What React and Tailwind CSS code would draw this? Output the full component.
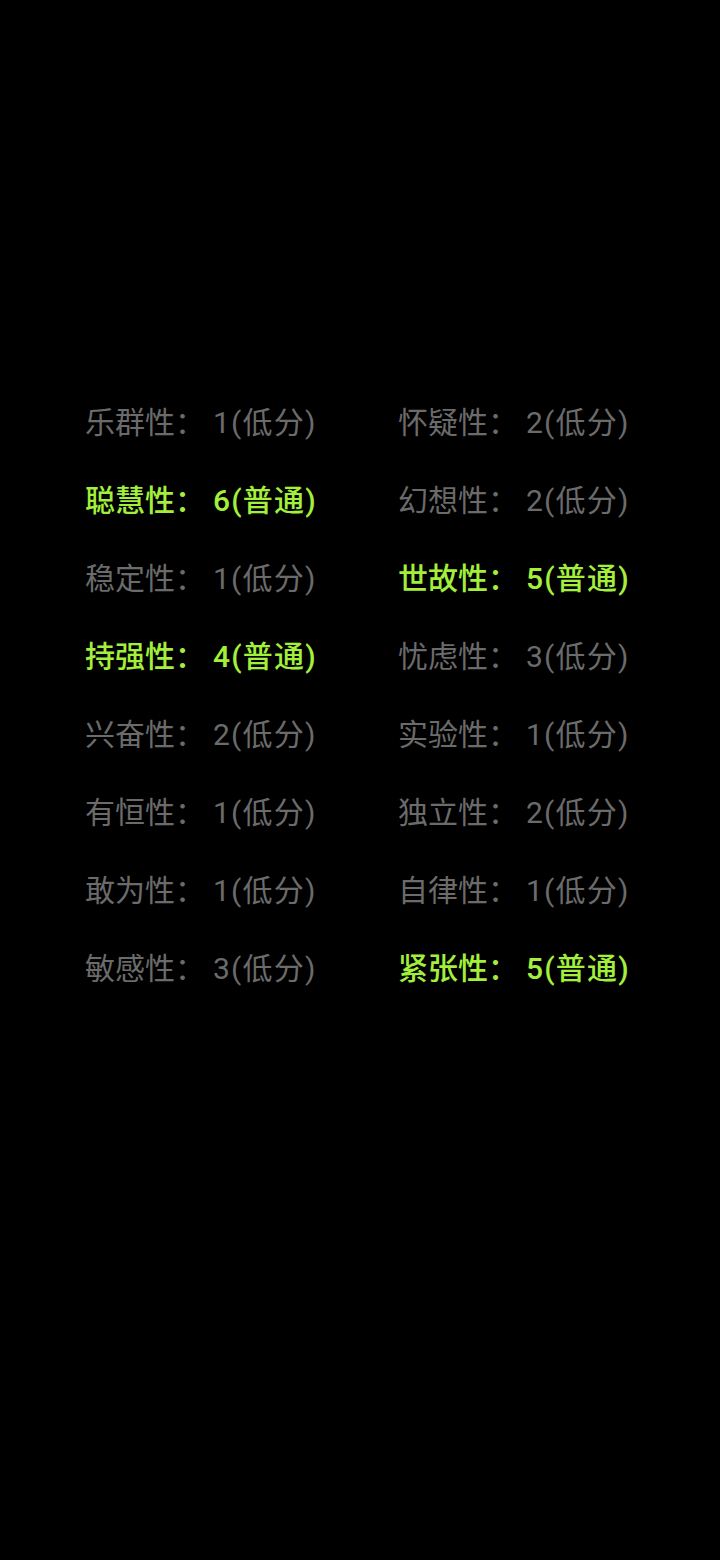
const traits = [
  ['乐群性', 1, false],
  ['怀疑性', 2, false],
  ['聪慧性', 6, true],
  ['幻想性', 2, false],
  ['稳定性', 1, false],
  ['世故性', 5, true],
  ['持强性', 4, true],
  ['忧虑性', 3, false],
  ['兴奋性', 2, false],
  ['实验性', 1, false],
  ['有恒性', 1, false],
  ['独立性', 2, false],
  ['敢为性', 1, false],
  ['自律性', 1, false],
  ['敏感性', 3, false],
  ['紧张性', 5, true],
];

export default function App() {
  return (
    <div
      className="bg-black w-[720px] h-[1560px] pt-[384px] pl-[85px]"
      style={{ fontFamily: 'Roboto, "Noto Sans CJK SC", sans-serif' }}
    >
      <div className="grid grid-cols-[313px_313px]">
        {traits.map(([name, score, normal]) => (
          <div
            key={name}
            className={`h-[78px] leading-[78px] text-[30px] whitespace-nowrap ${
              normal ? 'text-[#a3ef3c] font-medium' : 'text-[#6b6b6b]'
            }`}
          >
            {name}：<span className="ml-[8px] tracking-[1.2px]">{score}({normal ? '普通' : '低分'})</span>
          </div>
        ))}
      </div>
    </div>
  );
}
